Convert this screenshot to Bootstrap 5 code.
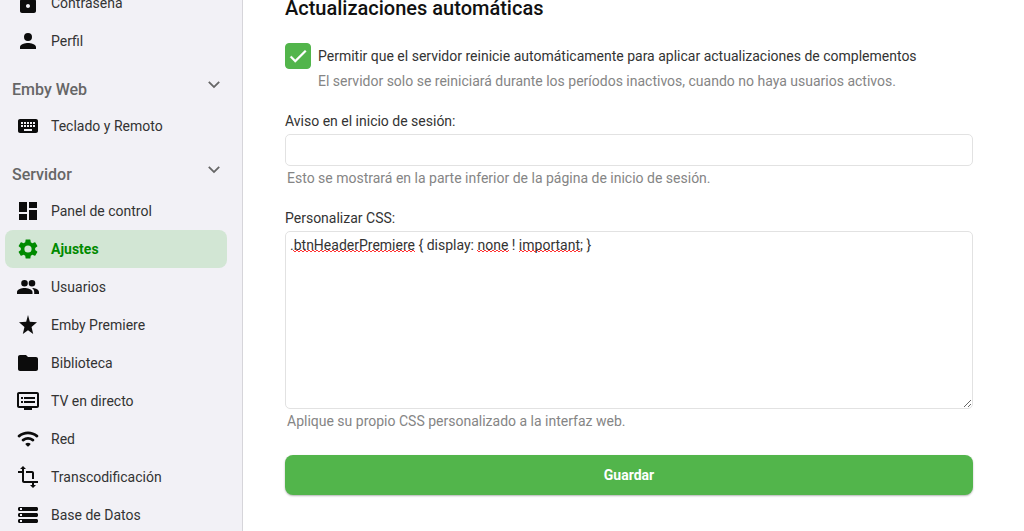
<!DOCTYPE html>
<html lang="es">
<head>
<meta charset="utf-8">
<meta name="viewport" content="width=device-width, initial-scale=1">
<title>Ajustes</title>
<link href="https://cdn.jsdelivr.net/npm/bootstrap@5.3.0/dist/css/bootstrap.min.css" rel="stylesheet">
<style>
  body { font-family: Roboto, "Liberation Sans", sans-serif; font-size: 14px; line-height: 20px; color: #333; background: #fff; }
  .side { width: 243px; background: #f2f1f6; border-right: 1px solid #d6d5da; }
  .side-scroll { margin-top: -16px; padding: 0 15px 0 5px; }
  .side .nav-link { height: 38px; padding: 0 11px; gap: 11px; color: #333; border-radius: 8px; }
  .side .nav-link.active { background: #d2e6d4; color: #008a00; font-weight: 700; }
  .side svg { width: 24px; height: 24px; fill: #0c0c0c; flex: none; }
  .side .active svg { fill: #008a00; }
  .group-head { height: 47px; padding: 20px 3px 0 7px; border: 0; background: none; color: #666; font-size: 16px; line-height: 20px; font-weight: 500; }
  .side .group-head svg { fill: #666; width: 20px; height: 20px; margin-top: -5px; }
  .settings { padding: 0 51px 35px 42px; }
  .settings h2 { font-size: 20px; line-height: 24px; font-weight: 500; color: #111; margin: -4px 0 23px; }
  .settings .form-check { gap: 7px; }
  .settings .form-check-input { width: 26px; height: 26px; border-radius: 4px; }
  .settings .form-check-input:checked { background-color: #52b54b; border-color: #52b54b; background-size: 22px; background-image: url("data:image/svg+xml,%3Csvg xmlns='http://www.w3.org/2000/svg' viewBox='0 0 24 24'%3E%3Cpath fill='white' stroke='white' stroke-width='.5' d='M9 16.2 4.8 12l-1.400 1.400L9 19 21 7l-1.400-1.400z'/%3E%3C/svg%3E"); }
  .settings .form-check-label { padding-top: 3px; }
  .settings .form-text { font-size: 14px; color: #858585; margin-top: 2px; }
  .settings .form-check .form-text { margin-top: 5px; }
  .settings .field-help { margin-left: 2px; }
  .settings .form-label { margin-bottom: 3px; }
  .settings .form-control { font-size: 14px; line-height: 20px; color: #333; border-color: #e2e2e2; border-radius: 5px; padding: 3px 4px; }
  .settings input.form-control { height: 32px; }
  .settings textarea.form-control {
    height: 178px;
    background-image: url("data:image/svg+xml,%3Csvg xmlns='http://www.w3.org/2000/svg' width='300' height='4'%3E%3Cdefs%3E%3Cpattern id='z' width='4' height='4' patternUnits='userSpaceOnUse'%3E%3Cpath d='M-1 0 1 2 3 0 5 2' transform='translate(0 1)' fill='none' stroke='%23f33' stroke-width='1'/%3E%3C/pattern%3E%3C/defs%3E%3Cpath fill='url(%23z)' d='M3 0h122v4H3zM187 0h32v4h-32zM229 0h61v4h-61z'/%3E%3C/svg%3E");
    background-repeat: no-repeat; background-position: 4px 17px;
  }
  .settings .btn-save { height: 40px; font-size: 14px; font-weight: 700; color: #fff; background: #52b54b; border: 0; border-radius: 8px; box-shadow: 0 1px 2px rgba(0,0,0,.3); }
</style>
</head>
<body class="overflow-hidden">
<div class="d-flex min-vh-100">
  <aside class="side flex-shrink-0">
    <nav class="side-scroll" aria-label="Menú">
      <div class="nav flex-column">
        <a class="nav-link d-flex align-items-center" href="#"><svg viewBox="0 0 24 24"><path d="M18 8h-1V6c0-2.760-2.240-5-5-5S7 3.240 7 6v2H6c-1.100 0-2 .9-2 2v10c0 1.100.9 2 2 2h12c1.100 0 2-.9 2-2V10c0-1.100-.9-2-2-2zm-6 9c-1.100 0-2-.9-2-2s.9-2 2-2 2 .9 2 2-.9 2-2 2zm3.100-9H8.900V6a3.100 3.100 0 0 1 6.200 0z"/></svg>Contraseña</a>
        <a class="nav-link d-flex align-items-center" href="#"><svg viewBox="0 0 24 24"><path d="M12 12a4 4 0 1 0 0-8 4 4 0 0 0 0 8zm0 2c-2.670 0-8 1.340-8 4v2h16v-2c0-2.660-5.330-4-8-4z"/></svg>Perfil</a>
        <button class="group-head d-flex justify-content-between align-items-start" type="button"><span>Emby Web</span><svg viewBox="0 0 24 24"><path d="M17.500 7.500 12 13 6.500 7.500 5 9l7 7 7-7z"/></svg></button>
        <a class="nav-link d-flex align-items-center" href="#"><svg viewBox="0 0 24 24"><path d="M20 5H4c-1.100 0-2 .9-2 2v10c0 1.100.9 2 2 2h16c1.100 0 2-.9 2-2V7c0-1.100-.9-2-2-2zm-9 3h2v2h-2zm0 3h2v2h-2zM8 8h2v2H8zm0 3h2v2H8zm-1 2H5v-2h2zm0-3H5V8h2zm9 7H8v-2h8zm0-4h-2v-2h2zm0-3h-2V8h2zm3 3h-2v-2h2zm0-3h-2V8h2z"/></svg>Teclado y Remoto</a>
        <button class="group-head d-flex justify-content-between align-items-start" type="button"><span>Servidor</span><svg viewBox="0 0 24 24"><path d="M17.500 7.500 12 13 6.500 7.500 5 9l7 7 7-7z"/></svg></button>
        <a class="nav-link d-flex align-items-center" href="#"><svg viewBox="0 0 24 24"><path d="M3 13h8V3H3zm0 8h8v-6H3zm10 0h8V11h-8zm0-18v6h8V3z"/></svg>Panel de control</a>
        <a class="nav-link active d-flex align-items-center" href="#" aria-current="page"><svg viewBox="0 0 24 24"><path d="M19.140 12.940c.04-.3.060-.61.060-.94s-.02-.64-.07-.94l2.030-1.580a.49.49 0 0 0 .12-.61l-1.920-3.320a.488.488 0 0 0-.59-.22l-2.390.96c-.5-.38-1.030-.7-1.620-.94l-.36-2.540a.484.484 0 0 0-.48-.41h-3.840c-.24 0-.43.170-.47.410l-.36 2.540c-.59.240-1.130.570-1.620.940l-2.390-.96a.49.49 0 0 0-.59.220L2.740 8.870c-.12.210-.08.470.12.610l2.030 1.580c-.05.3-.09.630-.09.940s.02.640.070.940l-2.030 1.580a.49.49 0 0 0-.12.610l1.920 3.320c.12.220.37.290.59.220l2.390-.96c.5.380 1.030.7 1.620.940l.36 2.540c.05.240.24.410.48.410h3.840c.24 0 .44-.17.470-.41l.36-2.540c.59-.24 1.130-.56 1.620-.94l2.390.96c.22.080.47 0 .59-.22l1.920-3.320a.49.49 0 0 0-.12-.61zM12 15.600a3.600 3.600 0 1 1 0-7.200 3.600 3.600 0 0 1 0 7.200z"/></svg>Ajustes</a>
        <a class="nav-link d-flex align-items-center" href="#"><svg viewBox="0 0 24 24"><path d="M17 13c2.700.3 6 1.600 6 4v2h-4.800v-2c0-1.700-.9-3-2.200-4zM16 11.500a3.300 3.300 0 1 0 0-6.600 3.300 3.300 0 0 0 0 6.600zM8.500 11.500a3.300 3.300 0 1 0 0-6.600 3.300 3.300 0 0 0 0 6.600zm0 1.500C5.800 13 1 14.340 1 17v2h15.500v-2c0-2.660-5.300-4-8-4z"/></svg>Usuarios</a>
        <a class="nav-link d-flex align-items-center" href="#"><svg viewBox="0 0 24 24"><path d="M12 17.270 17.180 21l-1.640-7.030L21 9.240l-7.190-.61L12 2 10.190 8.630 3 9.240l5.460 4.730L6.820 21z"/></svg>Emby Premiere</a>
        <a class="nav-link d-flex align-items-center" href="#"><svg viewBox="0 0 24 24"><path d="M10 4H4c-1.100 0-2 .9-2 2v12c0 1.100.9 2 2 2h16c1.100 0 2-.9 2-2V8c0-1.100-.9-2-2-2h-8z"/></svg>Biblioteca</a>
        <a class="nav-link d-flex align-items-center" href="#"><svg viewBox="0 0 24 24"><path d="M21 3H3c-1.100 0-2 .9-2 2v12c0 1.100.9 2 2 2h5v2h8v-2h5c1.100 0 2-.9 2-2V5c0-1.100-.9-2-2-2zm0 14H3V5h18zM19 8H8v2h11zm0 4H8v2h11zM7 8H5v2h2zm0 4H5v2h2z"/></svg>TV en directo</a>
        <a class="nav-link d-flex align-items-center" href="#"><svg viewBox="0 0 24 24"><path d="M2.060 10.060c.51.510 1.320.560 1.870.1 4.670-3.840 11.450-3.840 16.130-.01.56.460 1.380.420 1.890-.09.59-.59.550-1.570-.1-2.100-5.710-4.670-13.970-4.670-19.690 0-.65.520-.7 1.500-.1 2.100zm7.760 7.760 1.470 1.470c.39.390 1.020.390 1.410 0l1.470-1.470c.47-.47.370-1.280-.23-1.590a4.280 4.280 0 0 0-3.910 0c-.57.310-.68 1.120-.21 1.590zm-3.730-3.730c.49.490 1.260.540 1.830.13a7.060 7.060 0 0 1 8.160 0c.57.400 1.340.36 1.830-.13l.01-.01c.6-.6.560-1.620-.13-2.110a9.900 9.900 0 0 0-11.580 0c-.69.500-.73 1.510-.12 2.120z"/></svg>Red</a>
        <a class="nav-link d-flex align-items-center" href="#"><svg viewBox="0 0 24 24"><path d="M22 18v-2H8V4h2L7 1 4 4h2v2H2v2h4v8c0 1.100.9 2 2 2h8v2h-2l3 3 3-3h-2v-2zM10 8h6v6h2V8c0-1.100-.9-2-2-2h-6z"/></svg>Transcodificación</a>
        <a class="nav-link d-flex align-items-center" href="#"><svg viewBox="0 0 24 24"><path d="M3.500 20h17c.8 0 1.500-.7 1.500-1.500v-1c0-.8-.7-1.500-1.500-1.500h-17c-.8 0-1.500.7-1.500 1.500v1c0 .8.7 1.500 1.500 1.500zM4 17h2v2H4zM2 5.500v1C2 7.300 2.700 8 3.500 8h17c.8 0 1.500-.7 1.500-1.500v-1c0-.8-.7-1.500-1.500-1.500h-17C2.700 4 2 4.700 2 5.500zM6 7H4V5h2zM3.500 14h17c.8 0 1.500-.7 1.500-1.500v-1c0-.8-.7-1.500-1.500-1.500h-17c-.8 0-1.500.7-1.500 1.500v1c0 .8.7 1.500 1.500 1.500zM4 11h2v2H4z"/></svg>Base de Datos</a>
      </div>
    </nav>
  </aside>
  <main class="settings flex-grow-1">
    <h2>Actualizaciones automáticas</h2>
    <form>
      <div class="form-check d-flex align-items-start p-0 mb-0">
        <input class="form-check-input float-none m-0 flex-shrink-0" type="checkbox" id="autoRestart" checked aria-describedby="autoRestartHelp">
        <div>
          <label class="form-check-label d-block" for="autoRestart">Permitir que el servidor reinicie automáticamente para aplicar actualizaciones de complementos</label>
          <div class="form-text" id="autoRestartHelp">El servidor solo se reiniciará durante los períodos inactivos, cuando no haya usuarios activos.</div>
        </div>
      </div>
      <div>
        <label class="form-label d-block mt-3 pt-1" for="loginNotice">Aviso en el inicio de sesión:</label>
        <input class="form-control" type="text" id="loginNotice" aria-describedby="loginNoticeHelp">
        <div class="form-text field-help" id="loginNoticeHelp">Esto se mostrará en la parte inferior de la página de inicio de sesión.</div>
      </div>
      <div>
        <label class="form-label d-block mt-3 pt-1" for="customCss">Personalizar CSS:</label>
        <textarea class="form-control" id="customCss" aria-describedby="customCssHelp">.btnHeaderPremiere { display: none ! important; }</textarea>
        <div class="form-text field-help" id="customCssHelp">Aplique su propio CSS personalizado a la interfaz web.</div>
      </div>
      <button class="btn btn-save w-100 mt-4" type="submit">Guardar</button>
    </form>
  </main>
</div>
<script src="https://cdn.jsdelivr.net/npm/bootstrap@5.3.0/dist/js/bootstrap.bundle.min.js"></script>
</body>
</html>
